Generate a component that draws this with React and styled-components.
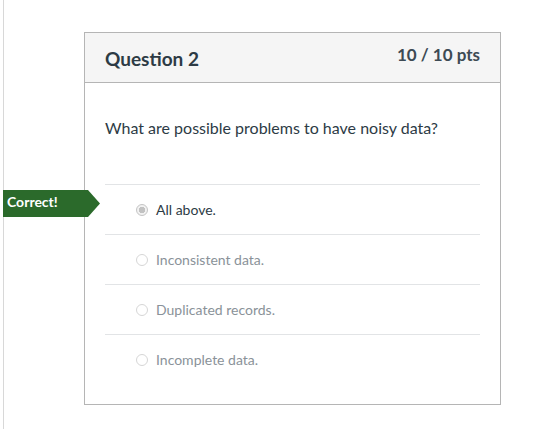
import styled, { createGlobalStyle } from "styled-components";

const GlobalStyle = createGlobalStyle`
	body {
		margin: 0;
		background: #fff;
		font-family: Lato, "Liberation Sans", sans-serif;
		color: #2d3b45;
	}
`;

const answers = [
	{ text: "All above.", selected: true },
	{ text: "Inconsistent data." },
	{ text: "Duplicated records." },
	{ text: "Incomplete data." },
];

const App = () => {
	return (
		<>
			<GlobalStyle />
			<Page>
				<Card>
					<CardHeader>
						<QuestionTitle>Question 2</QuestionTitle>
						<Points>10 / 10 pts</Points>
					</CardHeader>
					<CardBody>
						<QuestionText>What are possible problems to have noisy data?</QuestionText>
						<AnswerList>
							{answers.map((a) => (
								<AnswerRow key={a.text}>
									{a.selected && <CorrectFlag>Correct!</CorrectFlag>}
									<Radio $checked={a.selected} />
									<AnswerText $selected={a.selected}>{a.text}</AnswerText>
								</AnswerRow>
							))}
						</AnswerList>
					</CardBody>
				</Card>
			</Page>
		</>
	);
};

export default App;

const Page = styled.div`
	margin-left: 3px;
	min-height: 100vh;
	box-sizing: border-box;
	border-left: 1px solid #d8d8d8;
	padding: 32px 0 0 80px;
`;

const Card = styled.div`
	width: 417px;
	box-sizing: border-box;
	border: 1px solid #b5b5b5;
`;

const CardHeader = styled.div`
	height: 50px;
	box-sizing: border-box;
	padding: 0 20px;
	display: flex;
	justify-content: space-between;
	align-items: flex-start;
	background-color: #f5f5f5;
	border-bottom: 1px solid #b5b5b5;
`;

const QuestionTitle = styled.h2`
	margin: 14px 0 0;
	font-size: 19px;
	font-weight: 700;
	color: #2d3b45;
`;

const Points = styled.div`
	margin-top: 11px;
	font-size: 17px;
	font-weight: 700;
	color: #3d4a54;
`;

const CardBody = styled.div`
	padding: 0 20px 20px;
`;

const QuestionText = styled.p`
	margin: 0;
	padding: 36px 0 47px;
	font-size: 16px;
	line-height: 18px;
	color: #2d3b45;
`;

const AnswerList = styled.div`
	display: flex;
	flex-direction: column;
`;

const AnswerRow = styled.div`
	position: relative;
	height: 50px;
	box-sizing: border-box;
	border-top: 1px solid #e2e4e6;
	display: flex;
	align-items: center;
	padding-left: 31px;
`;

const Radio = styled.span`
	width: 12px;
	height: 12px;
	box-sizing: border-box;
	border-radius: 50%;
	border: 1px solid ${(p) => (p.$checked ? "#c4c4c4" : "#d6d6d6")};
	background: ${(p) =>
		p.$checked ? "radial-gradient(circle, #c2c2c2 0 3px, #f2f2f2 3.5px)" : "#fff"};
	margin-right: 8px;
`;

const AnswerText = styled.span`
	font-size: 14px;
	color: ${(p) => (p.$selected ? "#2d3b45" : "#8a9299")};
`;

const CorrectFlag = styled.div`
	position: absolute;
	left: -102px;
	top: 5px;
	width: 97px;
	height: 27px;
	box-sizing: border-box;
	padding: 3px 0 0 4px;
	background-color: #2b6a2b;
	clip-path: polygon(0 0, 85px 0, 97px 50%, 85px 100%, 0 100%);
	color: #fff;
	font-size: 14px;
	font-weight: 700;
`;
